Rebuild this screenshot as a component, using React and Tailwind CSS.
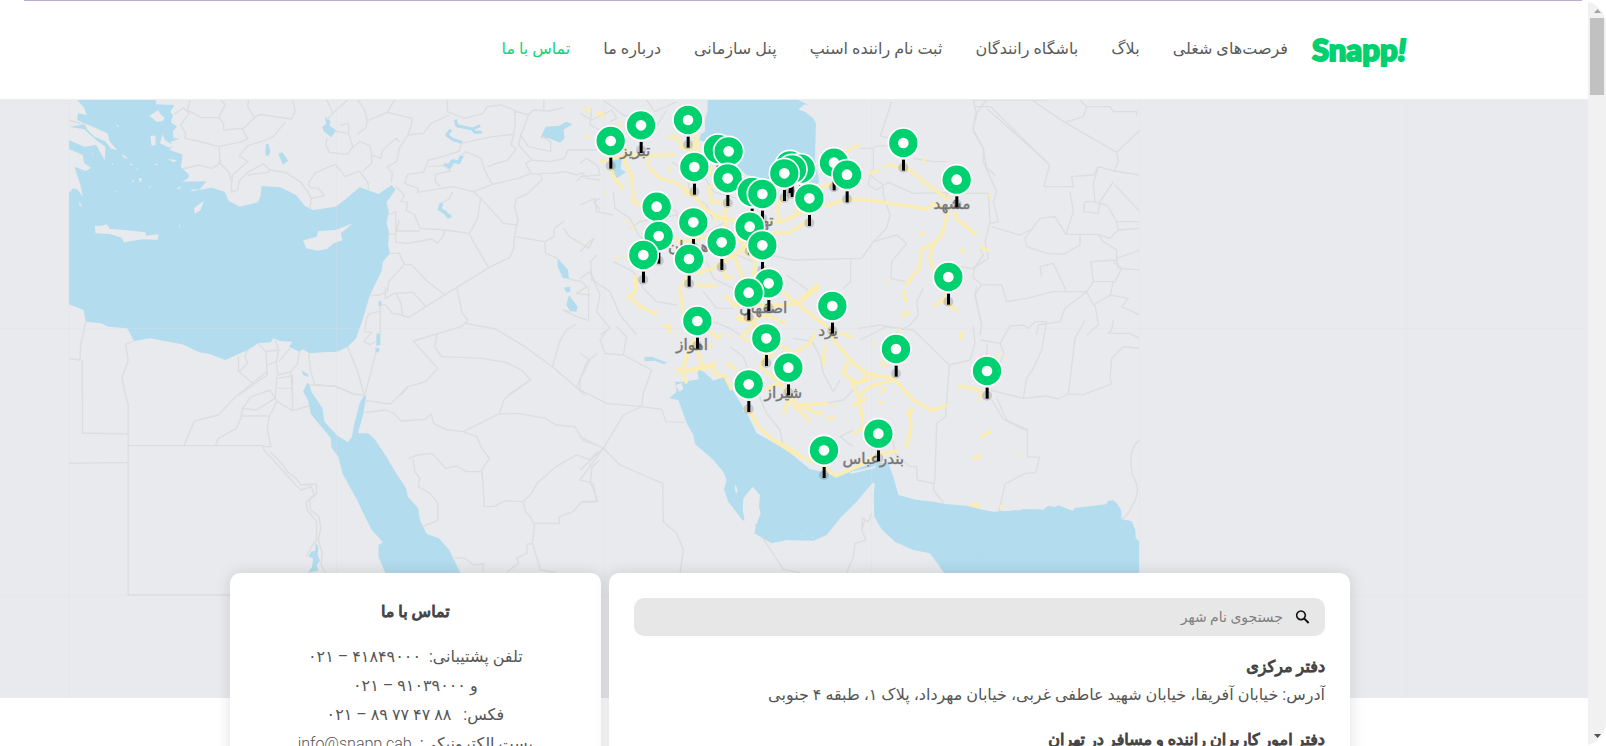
import React from "react";

const NAV = [
  { label: "فرصت‌های شغلی" },
  { label: "بلاگ" },
  { label: "باشگاه رانندگان" },
  { label: "ثبت نام راننده اسنپ" },
  { label: "پنل سازمانی" },
  { label: "درباره ما" },
  { label: "تماس با ما", active: true },
];

// Office pins, north to south, in the units of the Iran layer.
const PINS = [
  [324, 75], [183, 91], [92, 138], [970, 144], [414, 162], [446, 169],
  [762, 203], [630, 211], [343, 216], [662, 221], [636, 223], [613, 235],
  [801, 239], [443, 250], [1130, 254], [516, 291], [547, 297], [688, 310],
  [230, 335], [340, 382], [509, 395], [236, 423], [425, 442], [547, 451],
  [190, 480], [327, 492], [1105, 546], [566, 565], [506, 593], [757, 633],
  [352, 678], [559, 730], [948, 762], [625, 818], [1221, 828], [506, 868],
  [895, 1016], [732, 1066],
];

const LABELS = [
  ["تبریز", 166, 184], ["مشهد", 1116, 342], ["تهران", 528, 392],
  ["همدان", 325, 472], ["اصفهان", 550, 654], ["یزد", 744, 722],
  ["اهواز", 336, 766], ["شیراز", 610, 910], ["بندرعباس", 880, 1106],
];

const WEST = "translate(60 95) scale(0.34439 0.33333)";
const SOUTHWEST = "translate(60 340) scale(0.34439 0.33333)";
const IRAN = "translate(580 95) scale(0.33333)";
const GULF = "translate(580 320) scale(0.33333)";
const EAST = "translate(820 95) scale(0.33333)";
const SOUTHEAST = "translate(980 320) scale(0.33333)";

function Water() {
  return (
    <g fill="#b3dcee">
      <g transform={WEST}>
        <path d="M50 15H278L280 28 332 30 320 52 328 60 322 82 340 95 328 108 330 130 348 131 320 140 328 152 318 165 355 178 355 192 350 215 375 240 372 250 355 260 425 259 405 285 440 278 478 290 490 318 522 335 575 322 583 300 585 273 640 277 685 300 712 334 735 345 800 335 830 312 870 277 925 297 963 270 974 285 948 322 955 350 948 383 955 410 953 450 958 475 937 500 935 525 900 600 880 670 860 730 835 755 805 770 765 772 725 775 705 763 695 770 665 755 675 740 640 738 620 730 612 742 575 745 545 765 480 795 435 777 405 772 355 748 262 730 215 738 195 700 140 695 120 685 75 680 68 645 26 628V295L38 280 50 283 66 305 60 272 42 215 75 228 90 218 70 205 66 180 26 162V135L70 155 105 150 130 195 132 155 108 138 70 103 28 95 75 88 50 75 52 55 78 60 70 38Z" />
        <path d="M770 66 785 78 783 92 802 106 788 127 765 108 762 95 773 87ZM598 147H605L611 170 605 184 596 180ZM634 176 646 172 663 198 647 209ZM1395 128 1410 95 1450 92 1470 80 1488 88 1462 104 1465 130 1452 143 1420 130ZM1445 490 1475 525 1478 552 1460 548 1445 515ZM1463 578 1480 575 1483 590 1470 592ZM1478 600 1503 635 1500 650 1482 648 1470 630ZM925 618 935 620 932 636 925 632ZM919 716 930 715V750L918 752ZM915 758 928 760 926 772 917 772ZM702 826 722 840 720 846 706 840Z" />
        <g fill="none" stroke="#b3dcee" strokeWidth="9" strokeLinejoin="round">
          <path d="M1148 74 1152 92 1180 98 1198 102 1220 92M1195 100 1205 112 1225 112M1135 104 1123 120 1140 133 1168 143" />
          <path d="M1114 210 1130 212 1140 198 1158 202 1167 182M1128 220 1138 205M1108 324 1102 342 1118 352 1128 365 1135 360" strokeWidth="11" />
        </g>
      </g>
      <g transform={SOUTHWEST}>
        <path d="M718 128 724 133 730 155 762 205 768 245 803 285 836 307 848 290 853 258 870 190 884 165 889 170 880 225 865 280 895 280 915 300 948 350 975 398 1005 445 1010 470 1040 505 1045 540 1065 582 1100 595 1130 630 1163 700H945L925 650 925 615 938 607 905 570 860 475 820 400 808 350 788 322 787 295 738 235 728 220 720 180 706 155Z" />
        <path d="M741 608 750 620 748 645 755 662 745 675 750 692 720 698 732 680 735 655 722 650 728 635 742 632Z" />
      </g>
      <g transform={IRAN}>
        <path d="M383 15H655L658 45 675 50 700 70 708 85 705 190 718 262 700 275 640 262 560 252 500 240 470 215 400 150 358 135 362 118 375 110 375 75 383 45Z" />
        <path d="M655 15 690 32 675 28 655 42Z" />
        <path d="M92 190 125 195 122 222 138 232 110 250 95 215Z" />
      </g>
      <g transform={GULF}>
        <path d="M357 148 375 158 400 182 435 170 470 230 500 278 530 340 570 362 620 390 690 448 730 456 770 472 820 450 878 430 925 428 940 470 955 525 1010 540 1060 545 1095 552 1160 557 1200 568 1240 575 1380 568V762H1095L1050 700 1000 690 945 665 905 628 883 590 880 485 830 545 780 595 740 645 700 662 620 660 575 670 523 640 528 618 487 600 445 545 432 508 440 480 430 455 395 415 345 372 340 345 320 310 295 240 268 235 290 215 285 185 315 185 357 178 352 160Z" />
        <path d="M192 112 215 110 262 128 250 132 225 122 195 124Z" />
      </g>
      <g transform={SOUTHEAST}>
        <path d="M-10 568 45 578 60 572 95 575 100 569 110 574 130 567 190 569 205 557 225 561 235 556 278 572 285 564 330 559 378 553 385 542 400 541 412 552 424 572V597L455 604 466 630 467 655 479 665V762H-10Z" />
      </g>
    </g>
  );
}

function Islands() {
  return (
    <g fill="#e8eaed">
      <g transform={WEST}>
        <path d="M101 393 120 392 136 388 145 402 190 405 248 412 250 422 286 418 284 434 240 433 185 442 180 428 145 417 103 415ZM706 436 745 425 750 408 800 405 852 384 815 415 820 436 795 445 775 462 748 467 715 460ZM418 317 408 345 392 356 389 340ZM260 62 285 45 292 58 304 68 298 79 280 80ZM262 122 277 122 278 150 266 152ZM298 118 305 135 330 152 318 158 290 145ZM313 192 340 195 330 202ZM345 383 350 398 346 395ZM228 250 238 250 234 265ZM208 254 216 258 212 262ZM180 176 195 188 196 193 183 186ZM163 85 171 95 166 96ZM203 204 214 210 206 211ZM272 210 285 205 282 211ZM338 280 355 273 345 283ZM378 284 410 283 385 289ZM56 318 64 334 56 331ZM255 278 270 272 258 280ZM152 204 156 209 151 210ZM222 220 228 222 224 226ZM92 172 97 176 94 180ZM158 288 166 287 160 291Z" />
        <path d="M72 85 105 100 138 115 145 140 166 165 150 162 130 138 100 125 78 103Z" />
      </g>
      <g transform={GULF}>
        <path d="M518 500 540 525 537 560 542 580 530 612 515 622 495 610 488 570 490 535ZM466 492 473 510 470 522 464 510ZM286 196 305 188 310 208 298 215ZM808 456 888 438 885 444 812 462ZM872 500 885 488 880 530 870 540ZM694 652 706 653 698 655ZM664 643 670 644 666 646Z" />
      </g>
    </g>
  );
}

function Borders() {
  return (
    <g fill="none" stroke="#dcdddd" strokeWidth="4" strokeLinejoin="round">
      <g transform={WEST}>
        <path d="M332 58 358 38 375 55 350 90 365 115 362 130 400 138 460 155 530 140 545 130 528 100 475 105 475 85 460 67 410 68 370 45 378 15M460 67 480 30 468 15M530 103 565 68 545 35 548 15M565 68 580 58 672 72 683 50 676 15M655 80 620 125 598 135 545 152 520 182 545 200 500 240 500 262M462 155 465 205 440 220 405 210 355 222M460 200 490 230 498 262 498 292 516 285 520 258 545 232 590 207 608 222 605 232 545 240M608 225 655 232 700 262 718 288 730 310 725 340M730 310 768 302 750 280 725 278 722 262 740 235 770 220 800 208 828 245 870 228 895 265 895 285M775 15 792 55 775 75M792 55 835 15M775 130 772 150 782 172 835 178 850 155 838 115 798 108M838 112 838 85 815 90M865 15 885 45 892 78 888 98 862 118M890 78 950 52 972 15M950 52 1022 70 1020 90 1010 120 985 160 978 200 950 215 965 235 962 262M985 140 975 130 935 168 932 190 905 180 900 152 870 140 848 160M905 180 905 205 880 228M1010 120 1055 115 1078 85 1130 60M1125 15 1125 50 1175 70 1228 55 1240 35 1280 30 1320 45 1322 70 1318 118 1255 125 1165 145 1160 168 1112 185 1070 195 1055 232 1010 238 1000 265 1040 280 1038 292 1140 275 1200 290 1255 268 1235 230 1222 190 1178 170 1165 182M1070 215 1115 212 1135 228 1090 238 1090 262 1105 275M1320 48 1360 60 1375 45 1420 48 1465 38M1405 15 1405 45M1360 60 1350 90 1338 120 1360 155 1425 170 1425 140 1400 125M1318 118 1310 150 1325 160 1300 195 1240 215M1338 120 1332 150 1370 195 1425 200 1465 190 1475 165 1568 165M1370 195 1352 205 1368 235 1330 250 1255 268M1368 235 1395 238 1400 255 1355 298 1325 310 1320 335 1330 375 1318 430 1318 460 1305 488 1245 518 1062 635 1012 668 990 660M1395 235 1430 235 1468 230 1500 240 1518 233 1530 250 1568 255M1200 290 1222 310 1288 385 1330 390M1222 310 1212 372 1188 415 1200 440 1245 518M1188 415 1118 405 1045 400 1030 360 1005 345 1010 322 990 320 1000 300 975 275M1140 290 1130 312 1108 324M1118 405 1112 425 1095 445 1080 432 1010 445 975 442 975 350 955 360M955 418 975 418M985 375 978 408 1045 408M958 475 985 475 1000 508 968 545 955 560 950 590 930 600M1000 508 1020 508 1062 555 1118 600M930 600 900 602M945 575 945 610 970 595 1025 592 1062 635M930 632 945 628 965 655 995 660 990 625 975 595M930 635V715M925 650 900 655 890 670 885 710 905 712 882 740 900 748 918 740M918 770 905 822 885 900M835 755 865 832 882 895M1320 425 1408 440 1435 425 1435 400 1465 378M1462 400 1480 425 1535 460 1550 430M1408 440 1410 475 1445 490M1478 552 1515 560 1530 575 1500 595 1540 600M1482 650 1460 645 1500 665 1530 675M1153 580 1168 655 1185 675 1165 695 1025 738 1097 820 1062 860 1010 875 990 900M1178 685 1265 702 1350 755 1430 815 1525 900M1095 718 1088 755 1108 785 1225 790 1295 802 1340 825 1367 855 1300 900M1430 815 1450 742 1470 705 1498 688M1500 878 1530 800 1560 775M75 680 60 750 58 795 26 790M65 795V900M215 738 190 748 198 795 180 850 190 900M545 765 537 785 545 805 520 830 563 868 520 900M518 785V832M575 745 598 770 602 840 563 868M598 770 635 765M625 735 635 765 628 800 603 810M635 800 655 775 668 762M628 800 632 840 670 830 690 805 695 770M670 830 675 900M632 850 675 842M722 775 728 830 740 868 800 875 850 895M632 880 675 880" />
        <path d="M1568 310 1550 320 1568 345M1500 260 1518 240M1560 480 1540 500 1545 560M1535 575V680M26 75 75 90" />
      </g>
      <g transform={SOUTHWEST}>
        <path d="M190 165 198 190V765H494M65 60V279L198 282M26 370 198 367M198 317H590L592 330 632 375 685 435 700 450 730 440 738 465 715 485 718 510 745 545 745 600 735 612 715 650M600 95 510 170 460 225 390 243 360 317M610 150 555 170 530 205 525 235 512 265 460 295 452 315M530 205 570 210 625 175 630 110M610 150 630 185 608 228 602 265 612 320 592 320M525 228H608M632 185 675 212 722 198M675 105V212M610 335 645 372 660 395 685 415 700 435 745 432 745 460 725 480 728 510 752 530 757 565 750 600 762 640 758 675 770 697M722 135 800 138 850 162 882 165M889 182 960 192 1010 140M884 218 945 210 970 220 990 243 1060 238 1078 222 1085 250 1120 268 1170 275 1275 222 1290 178 1367 118M1170 275 1210 290 1225 325 1247 355 1225 390 1232 500 1260 500 1290 483 1345 485 1370 460 1385 430 1440 380 1500 345 1540 360 1560 335M1275 222 1330 220 1410 235 1440 255 1495 260 1520 302 1555 315M1012 355 1040 345 1080 340 1120 385 1150 378 1180 395 1225 395M1025 358 1030 395 1045 415 1040 440 1075 460 1097 490 1097 542 1052 560M1345 485 1352 515 1365 530 1378 555 1372 610 1395 690 1440 697M1378 550 1450 550 1450 530 1490 515 1515 485 1562 483 1540 425 1545 380 1568 360M1372 612 1357 612 1355 640 1325 655 1332 668 1298 697M1145 653 1175 655 1200 675 1230 672 1228 697" />
      </g>
      <g transform={IRAN}>
        <path d="M0 55 35 75 95 45 110 70 90 80M70 15 130 60 190 75 225 100 260 45M200 15 225 50 290 20M0 205 20 190 55 215 60 240 0 245M35 40 30 90 70 110 95 180M0 330 45 310 50 350 100 360M100 290 105 340 150 370 175 420 215 450M0 470 40 430M150 400 180 380 290 360 310 390M275 200 320 230 330 300 380 330 400 375M370 240 400 290 470 310M250 330 290 350 300 400 380 410 440 380M100 500 160 530 190 580 230 620 290 630M0 550 30 530 45 560 90 590 120 660 170 720M30 530 60 600 50 650 90 700 60 720M380 500 400 550 460 580 500 560M390 460 470 480 520 500M570 480 640 495 845 490 880 440 920 400 930 360 910 300 910 270 870 240M812 490V560L790 580M880 440 950 420 980 445 935 500 932 550 975 560M900 125 935 20M905 125 940 130M870 245 865 270 890 285 925 262 1000 295 1130 292M840 160 880 160 880 230 870 240M950 150 880 155M1000 190 1060 200 1100 200M1100 315 1100 295H1225L1230 380 1215 440 1225 490 1180 520 1130 515M1400 15 1180 15 1190 60 1178 100 1210 160 1210 200 1250 290 1240 320 1255 380 1230 385M1220 40 1400 200M1030 580 1010 620 1015 660 990 690 940 720M835 700 900 690 950 700M1190 575 1185 600 1205 690 1200 720M370 590 410 640 460 640M400 680 450 700 480 720M620 540 690 590M640 730 700 740" />
      </g>
      <g transform={GULF}>
        <path d="M0 210 80 250 185 260 245 268 258 305 315 307M0 210 0 180 30 120 0 100M185 260 190 220 215 150 130 105 75 100 60 60 90 20M130 105 140 50 110 20M185 260 130 285 70 385 0 450M70 385 120 435 248 490 250 605 290 640 310 690 300 760M0 350 70 385 0 480 40 490 50 545 0 548M545 650 555 665 610 748 660 758M855 600 845 630 858 660 825 670 820 710 800 760M875 580 865 605 848 595 845 630M450 80 490 110 505 150M530 210 560 280 600 330 610 380M690 50 720 110 730 160 760 215 780 180M840 60 920 20 1000 30 1108 135 1097 290 1070 310 1065 470 1060 510 1092 550M1108 135 1170 120 1185 70 1180 20M1250 235 1280 300 1342 330M820 330 780 350 820 380M830 200 790 240 740 250M935 340 945 400 990 440 1010 440 1012 480 1060 490" />
      </g>
      <g transform={EAST}>
        <path d="M635 15 735 82 790 65 800 35 780 15M735 82 890 172 960 105M800 35 870 35 880 50 950 50 950 62M890 172 895 200 883 228 960 240M883 228 835 215 820 240 755 245 760 275 672 275 688 210 512 35 465 35M835 215 820 265 825 320 795 320 790 350 835 355 840 320 880 260M820 320 860 330 890 380 895 405 870 430 835 418 738 418 705 365 660 370 615 430 620 455 680 475 730 478 780 450 780 420M738 418 760 350 750 290M895 405 960 400M835 418 850 440 890 465 890 490 960 465M890 490 895 520 960 525M813 500 890 495M813 500 820 560 800 590 740 590 700 505 660 515 665 545M800 590 700 590 620 610 560 620 545 570 485 568 460 550 462 520 490 480 480 460M485 568 465 600 485 690 480 720M515 395 600 420 640 400M500 15 465 60 460 110 490 160 500 220 525 240 510 225M885 270 960 350M888 380 960 380M800 590 820 630 870 600 925 610 905 635 960 660M820 560 885 560 905 520 880 500M650 720 655 690 720 680 735 640 800 590M825 630 835 690 800 720M870 605 880 560" />
      </g>
      <g transform={SOUTHEAST}>
        <path d="M0 60 60 70 72 100 60 130M60 70 90 18 130 15 145 25 165 5 200 5 185 90 160 145 140 175 130 235 30 210M130 235 200 228 235 237 265 222 310 224 395 192 390 175 395 115 430 80 479 85M265 222 285 55 315 0M400 0 395 30 385 40 450 40 479 55M35 240 70 298 125 325 142 330V410L178 412 168 458 135 460 75 492 60 560 55 575M479 358C445 390 450 430 458 465 475 495 480 520 455 560 445 580 440 590 425 597M22 70 20 105" />
      </g>
    </g>
  );
}

function Roads() {
  return (
    <g fill="none" stroke="#fbedb1" strokeWidth="10" strokeLinejoin="round">
      <g transform={IRAN}>
        <path d="M15 35 32 52M45 58 65 55 70 70M115 80 122 95M18 125H28M75 290H82M58 198 85 195 140 180 205 180 285 178M92 215 100 245 130 282M100 135 140 165 135 205 155 240 160 320 185 332M205 180 205 215 240 250 280 260 330 290 380 345 430 372 480 375 540 385 600 382 640 365 700 340 760 325 810 312 870 316 950 328 1040 342 1060 325 1110 345M322 60 350 130 330 165 305 155 290 125 265 128M350 130 355 190 385 225 400 220M385 225 410 265 385 280 395 320 440 325 435 372 445 420 300 440 285 430M445 420 490 445 500 480 580 415 630 412 690 375M490 445 525 500 520 540 595 580 650 625 740 695M600 380 590 345 600 320 615 300M640 370 655 340 690 310M720 278 760 265M785 175 838 150M868 235 900 225M912 218 930 210 990 225 1050 275 1110 315M1105 350 1085 420 1060 445 1022 465 1020 515 975 572M1060 445 1050 485 1060 525M968 585 978 620M963 665 990 648M1125 350 1130 372 1188 418M1200 455 1225 468M1143 460 1152 475M1020 418H1035M1030 190 1035 205M1228 298 1232 308M1060 632 1090 618 1133 648M1090 618 1095 590M920 560H927M305 520 350 535 400 520 470 475 495 455M345 568 410 575M330 535 300 580 310 660 340 700M165 540 168 590 145 605 190 640 230 658M105 490H115M135 490 160 490M140 380 148 385M155 395 160 402M460 480 495 560 500 600M425 515 440 550 460 545M435 600 460 630 520 630 600 630 650 625 710 570 715 580 660 620M465 670 510 680 560 660 615 685M520 690 480 730M250 690 270 700 265 715M265 225H275M330 300 310 290M430 372 400 370M440 360 430 420" />
      </g>
      <g transform={GULF}>
        <path d="M250 15 268 18 272 32M288 45H293M340 55 305 155 320 190M305 155 380 138 408 128M340 60 355 100 370 150M290 145 305 155 400 140 410 165 435 168 455 210M385 80 400 75M385 30 415 55 425 40M450 45H455M470 -10 520 0 530 30 600 75 640 100 690 70 705 40M525 10 560 100 540 140 600 190 640 245M440 128 470 150M490 60 510 60M600 75 570 110 540 130M740 15 760 60 820 130 860 160 940 175 1000 240 1055 272 1100 255M770 40 820 50M735 75 730 135M805 125 790 160 830 190 905 165M855 160 850 185 815 185 835 230 845 280 850 325 820 342M835 230 870 200 940 180M815 255 860 235M905 220 915 200M895 248H910M900 125 920 140M955 35 965 30M880 70V76M980 270 990 290 995 265M990 290 993 320 978 385M1145 35V60M1135 198 1180 205 1203 215 1200 245M1200 352 1235 332M1175 415 1195 415 1200 400M1310 405H1320M1170 555 1195 555 1200 562M1260 560H1272M625 240 660 255 745 250M660 255 700 275 730 280M625 240 610 280M635 258 660 270 690 305M735 295 765 295M760 250 765 258M490 270 510 275 535 320 580 360 650 405 720 432 768 468 830 440 890 405 955 392M590 365 655 400M555 210 600 190" />
        <path d="M1250 105H1257M1270 106H1274" />
      </g>
    </g>
  );
}

function OfficeMap() {
  return (
    <svg
      role="img"
      aria-label="نقشه دفاتر اسنپ"
      viewBox="0 100 1588 598"
      preserveAspectRatio="xMidYMid slice"
      className="block h-full w-full"
    >
      <defs>
        <clipPath id="tiles">
          <rect x="69" y="100" width="1070" height="598" />
        </clipPath>
      </defs>
      <rect y="100" width="1588" height="598" fill="#e8eaed" />
      <g clipPath="url(#tiles)">
        <Water />
        <Islands />
        <Borders />
        <Roads />
      </g>
      <path
        d="M69 100V698M336.5 100V698M604 100V698M871.5 100V698M1139.5 100V698M1406.5 100V698M0 328.5H1588M0 595.5H1588"
        stroke="#dfe2e6"
        strokeOpacity="0.3"
        fill="none"
      />
      <g transform={IRAN}>
        {LABELS.map(([name, x, y]) => (
          <text
            key={name}
            x={x}
            y={y}
            textAnchor="middle"
            fontSize="46"
            fill="#757575"
            stroke="#757575"
            strokeOpacity="0.6"
            strokeWidth="2"
            className="font-['DejaVu_Sans',sans-serif]"
          >
            {name}
          </text>
        ))}
        {PINS.map(([x, y]) => (
          <g key={`${x}-${y}`} transform={`translate(${x} ${y})`}>
            <circle cy="74" r="15" fill="#000000" fillOpacity="0.15" />
            <rect x="-4" y="50" width="9" height="33" fill="#000000" />
            <circle r="45" fill="#00d170" stroke="#ffffff" strokeWidth="5" />
            <circle r="16" fill="#ffffff" />
          </g>
        ))}
      </g>
    </svg>
  );
}

function Header() {
  return (
    <header className="h-[99px] border-b border-[#ececec] bg-white pr-2 pb-[3px]">
      <div className="mx-auto flex h-full max-w-[1232px] items-center gap-6">
        <a
          href="#home"
          dir="ltr"
          className="font-['Lato',sans-serif] text-[31px] leading-8 font-black text-[#00d170] [-webkit-text-stroke:2px_#00d170]"
        >
          Snapp<span className="italic">!</span>
        </a>
        <nav className="flex items-center gap-[33px] text-base whitespace-nowrap">
          {NAV.map((item) => (
            <a
              key={item.label}
              href="#page"
              aria-current={item.active ? "page" : undefined}
              className={item.active ? "text-[#21d07a]" : "text-[#5a5a5a]"}
            >
              {item.label}
            </a>
          ))}
        </nav>
      </div>
    </header>
  );
}

function ContactCard() {
  return (
    <section className="rounded-[10px] bg-white px-6 py-[25px] text-center shadow-[0_0_16px_rgba(0,0,0,0.12)]">
      <h2 className="mb-4 text-base leading-7 font-normal text-[#444444] [-webkit-text-stroke:1px_#444444]">
        تماس با ما
      </h2>
      <div className="text-base leading-[29px] text-[#555555]">
        <p>تلفن پشتیبانی:&nbsp; ۴۱۸۴۹۰۰۰ – ۰۲۱</p>
        <p>و ۹۱۰۳۹۰۰۰ – ۰۲۱</p>
        <p>فکس:&nbsp;&nbsp; ۸۸ ۴۷ ۷۷ ۸۹ – ۰۲۱</p>
        <p>
          پست الکترونیکی:&nbsp;{" "}
          <a href="mailto:info@snapp.cab" className="font-light">info@snapp.cab</a>
        </p>
      </div>
    </section>
  );
}

function OfficesCard() {
  return (
    <section className="rounded-[10px] bg-white p-[25px] text-right shadow-[0_0_16px_rgba(0,0,0,0.12)]">
      <label className="flex h-[38px] items-center gap-3 rounded-[10px] bg-[#e7e7e7] px-[14px]">
        <svg viewBox="0 0 24 24" className="h-4 w-4 shrink-0" aria-hidden="true">
          <circle cx="9" cy="9.5" r="6.500" fill="none" stroke="#111111" strokeWidth="2.400" />
          <path d="m13.500 14 7 7" stroke="#111111" strokeWidth="3" />
        </svg>
        <input
          type="search"
          aria-label="جستجوی نام شهر"
          placeholder="جستجوی نام شهر"
          className="min-w-0 flex-1 bg-transparent text-sm outline-none placeholder:text-[#808080]"
        />
      </label>
      <h3 className="mt-[17px] text-base leading-7 font-normal text-[#444444] [-webkit-text-stroke:1px_#444444]">
        دفتر مرکزی
      </h3>
      <p className="text-base leading-7 text-[#555555]">
        آدرس: خیابان آفریقا، خیابان شهید عاطفی غربی، خیابان مهرداد، پلاک ۱، طبقه ۴ جنوبی
      </p>
      <h3 className="mt-[17px] text-base leading-7 font-normal whitespace-nowrap text-[#444444] [-webkit-text-stroke:1px_#444444]">
        دفتر امور کاربران راننده و مسافر در تهران
      </h3>
    </section>
  );
}

function Scrollbar() {
  return (
    <div aria-hidden="true" className="flex w-[18px] shrink-0 flex-col items-center justify-between bg-[#f1f1f1] pt-2 pb-2">
      <div className="flex flex-col items-center gap-[5px]">
        <svg viewBox="0 0 7 4" className="h-1 w-[7px]"><path d="M0 4 3.500 0 7 4Z" fill="#a3a3a3" /></svg>
        <div className="h-[77px] w-[14px] bg-[#c1c1c1]" />
      </div>
      <svg viewBox="0 0 7 4" className="h-1 w-[7px]"><path d="M0 0 3.500 4 7 0Z" fill="#505050" /></svg>
    </div>
  );
}

export default function App() {
  return (
    <div className="flex h-screen flex-col bg-white">
      <div className="mx-6 h-px shrink-0 bg-[#b9adc9]" />
      <div className="flex min-h-0 flex-1 overflow-hidden rounded-[24px] font-['Roboto','DejaVu_Sans',sans-serif]">
        <div dir="rtl" className="min-w-0 flex-1 overflow-hidden bg-white">
          <Header />
          <main>
            <div className="h-[598px] bg-[#e8eaed]">
              <OfficeMap />
            </div>
            <div className="relative -mt-[125px] pr-2">
              <div dir="ltr" className="mx-auto grid max-w-[1120px] grid-cols-[1fr_2fr] gap-2">
                <div dir="rtl" className="grid"><ContactCard /></div>
                <div dir="rtl" className="grid"><OfficesCard /></div>
              </div>
            </div>
          </main>
        </div>
        <Scrollbar />
      </div>
    </div>
  );
}
